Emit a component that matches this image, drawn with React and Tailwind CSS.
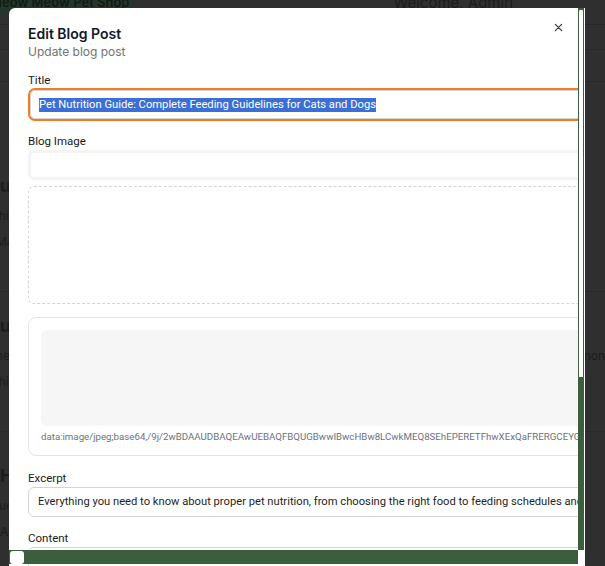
import React from 'react';

const dataUri =
  'data:image/jpeg;base64,/9j/2wBDAAUDBAQEAwUEBAQFBQUGBwwIBwcHBw8LCwkMEQ8SEhEPERETFhwXExQaFRERGCEYGh0dHx8fExciJCIeJBweHx7/2wBDAQUFBQcGBw4ICA4eFBEUHh4eHh4eHh4e';

const BackgroundPage = () => (
  <div className="min-h-[566px] w-full bg-[#2f2f2f] text-[#1c1c1c] font-['Inter',sans-serif]">
    {/* header */}
    <div className="flex h-[25px] items-start justify-between border-b border-[#262626]">
      <div className="-mt-[7px] bg-[#22372a] px-1 text-[13px] font-semibold text-[#111a13] -ml-[14px]">Meow Meow Pet Shop</div>
      <div className="-mt-[8px] mr-[92px] text-[15px]">Welcome, Admin</div>
    </div>
    <div className="h-[25px] border-b border-[#292929]" />
    <div className="flex h-[32px] items-center border-b border-[#292929] px-[10px] text-[13px]">Posts</div>
    <div className="flex flex-col gap-[8px] border-b border-[#292929] px-0 pb-[40px] pt-[90px]">
      <div className="-ml-[14px] text-[18px] font-bold">Nutrition</div>
      <div className="flex justify-between text-[12px]">
        <span className="-ml-[20px]">Within this guide</span>
        <span className="mr-[64px]">control.</span>
      </div>
      <div className="-ml-[4px] text-[12px]">Max</div>
    </div>
    <div className="flex flex-col gap-[8px] border-b border-[#292929] pb-[40px] pt-[20px]">
      <div className="-ml-[14px] text-[18px] font-bold">Nutrition</div>
      <div className="flex justify-between text-[12px]">
        <span className="-ml-[24px]">all the</span>
        <span className="mr-[0px]">common</span>
      </div>
      <div className="-ml-[20px] text-[12px]">Within</div>
    </div>
    <div className="flex flex-col gap-[8px] pt-[30px]">
      <div className="text-[18px] font-bold">H</div>
      <div className="-ml-[10px] text-[12px]">Guest</div>
      <div className="text-[12px]">Ah</div>
    </div>
  </div>
);

const Label = ({ children, className = '' }) => (
  <div className={`text-[11.5px] leading-[14px] font-normal text-[#1a1a1a] ${className}`}>{children}</div>
);

const EditModal = () => (
  <div className="absolute left-[9px] top-[8px] flex h-[558px] w-[576px] overflow-hidden rounded-tl-md bg-white">
    <div className="relative flex w-[569px] flex-col overflow-hidden">
      <div className="flex w-[620px] flex-col px-[19px] font-['Roboto',sans-serif]">
        <div className="flex items-start justify-between pt-[17px]">
          <div className="flex flex-col font-['Inter',sans-serif]">
            <h2 className="text-[14px] leading-[17px] font-semibold text-[#111827]">Edit Blog Post</h2>
            <p className="mt-[3px] text-[12px] leading-[14px] text-[#737373]">Update blog post</p>
          </div>
        </div>

        <Label className="mt-[14px]">Title</Label>
        <div className="mt-[1px] h-[33px] rounded-[7px] border-2 border-[#f47a1f]">
          <div className="flex h-full items-center rounded-[5px] border border-[#d4d4d8] px-[8px]">
            <span className="bg-[#3b6fd5] text-[11.2px] leading-[14px] text-white">
              Pet Nutrition Guide: Complete Feeding Guidelines for Cats and Dogs
            </span>
          </div>
        </div>

        <Label className="mt-[13px]">Blog Image</Label>
        <div className="mt-[2px] h-[30px] rounded-md border-[3px] border-[#f4f4f4] bg-white" />

        <div className="mt-[6px] h-[118px] rounded-md border border-dashed border-[#d4d4d8]" />

        <div className="mt-[13px] flex flex-col rounded-lg border border-[#e5e5e5] px-[12px] pt-[12px] pb-[12px]">
          <div className="h-[96px] rounded-md bg-[#f6f6f6]" />
          <div className="mt-[5px] whitespace-nowrap text-[9.7px] leading-[12px] text-[#6b7280]">{dataUri}</div>
        </div>

        <Label className="mt-[15px]">Excerpt</Label>
        <div className="mt-[2px] flex h-[30px] items-center rounded-md border border-[#d4d4d8] px-[9px]">
          <span className="whitespace-nowrap text-[11.2px] leading-[14px] text-[#1f1f1f]">
            Everything you need to know about proper pet nutrition, from choosing the right food to feeding schedules and portion control.
          </span>
        </div>

        <Label className="mt-[14px]">Content</Label>
        <div className="mt-[2px] h-[80px] rounded-md border border-[#d4d4d8]" />
      </div>

      {/* close button */}
      <button className="absolute right-[14px] top-[13px] flex h-[12px] w-[12px] items-center justify-center text-[#3f3f46]">
        <svg width="9" height="9" viewBox="0 0 10 10" fill="none" stroke="currentColor" strokeWidth="1.4" strokeLinecap="round">
          <path d="M1.5 1.5l7 7M8.5 1.5l-7 7" />
        </svg>
      </button>

      {/* horizontal scrollbar */}
      <div className="absolute bottom-[2px] left-0 flex h-[14px] w-full items-center bg-[#3b5f3d] pl-[1px]">
        <div className="h-[13px] w-[14px] rounded-[3px] bg-white" />
      </div>
    </div>

    {/* vertical scrollbar */}
    <div className="flex h-[542px] w-[6px] flex-col bg-[#3b5f3d]">
      <div className="mt-[1px] h-[369px] w-full rounded-t-[2px] border border-[#3b5f3d] bg-white" />
    </div>
    <div className="h-full w-[1px] bg-white" />
  </div>
);

export default function App() {
  return (
    <div className="relative h-[566px] w-[605px] overflow-hidden">
      <BackgroundPage />
      <EditModal />
    </div>
  );
}
